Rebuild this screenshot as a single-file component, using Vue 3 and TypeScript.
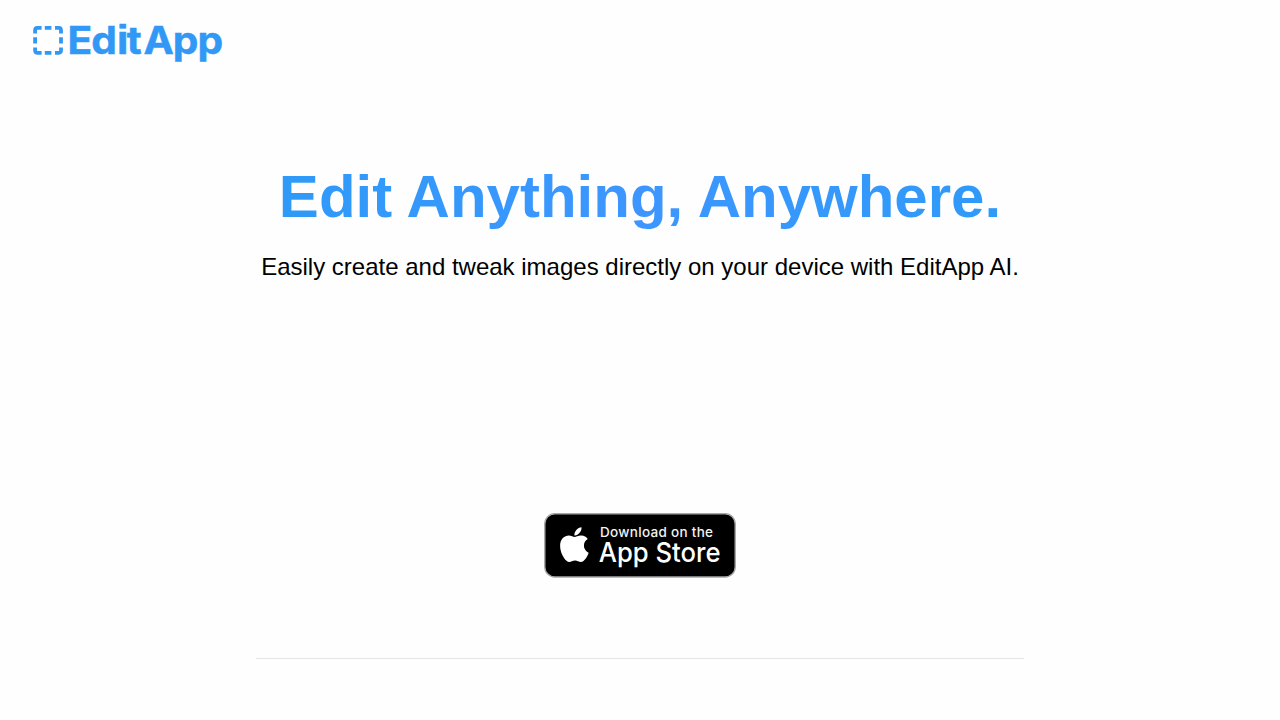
<script setup lang="ts">
interface Props {
  title?: string
  subtitle?: string
}

withDefaults(defineProps<Props>(), {
  title: 'Edit Anything, Anywhere.',
  subtitle: 'Easily create and tweak images directly on your device with EditApp AI.'
})
</script>

<template>
  <div class="page">
    <header class="header">
      <a class="brand" aria-label="EditApp">
        <svg class="logo" width="210" height="58" viewBox="0 -8 210 58">
          <!-- selection marquee -->
          <g fill="none" stroke="#3199f5" stroke-width="3.8" stroke-linejoin="round">
            <path d="M3.1 13.6V10.2Q3.1 7.8 5.5 7.8H9.6" />
            <path d="M23 7.8H26.8Q29 7.8 29 10.2V13.6" />
            <path d="M29 27.4V30.6Q29 32.8 26.8 32.8H23" />
            <path d="M9.6 32.8H5.5Q3.1 32.8 3.1 30.6V27.4" />
            <path d="M12.8 7.8H19.4M12.8 32.8H19.4M3.1 17.3V23.6M29 17.3V23.6" />
          </g>
          <text class="logo-text" transform="scale(1.07 1)" x="33.2 55.4 79.3 88.6 104.1 131.6 154.8" y="33.8">Ed<tspan class="logo-i">i</tspan>tApp</text>
        </svg>
      </a>
    </header>

    <main class="hero">
      <h1 class="title">{{ title }}</h1>
      <p class="subtitle">{{ subtitle }}</p>
      <a class="store-link" aria-label="Download on the App Store">
        <svg class="badge" width="192" height="65" viewBox="0 0 192 65">
          <rect x="0.8" y="0.8" width="190.4" height="63.2" rx="10" fill="#000" stroke="#a6a6a6" stroke-width="1.4" />
          <g transform="translate(15.8 14.2) scale(0.0758 0.0775)" fill="#fff">
            <path d="M318.7 268.7c-.2-36.7 16.4-64.4 50-84.8-18.8-26.9-47.2-41.7-84.7-44.6-35.5-2.8-74.3 20.7-88.5 20.7-15 0-49.4-19.7-76.4-19.7C63.3 141.2 4 184.8 4 273.5q0 39.3 14.4 81.2c12.8 36.7 59 126.7 107.2 125.2 25.2-.6 43-17.9 75.8-17.9 31.8 0 48.3 17.9 76.4 17.9 48.6-.7 90.4-82.5 102.6-119.3-65.2-30.7-61.7-90-61.7-91.9zm-56.6-164.2c27.3-32.4 24.8-61.9 24-72.5-24.1 1.4-52 16.4-67.9 34.9-17.5 19.8-27.8 44.3-25.6 71.9 26.1 2 49.9-11.4 69.5-34.3z" transform="translate(0 -32)" />
          </g>
          <text class="badge-small" x="56" y="24" textLength="113">Download on the</text>
          <text class="badge-large" x="54.8" y="49.2" textLength="121.8" lengthAdjust="spacingAndGlyphs">App Store</text>
        </svg>
      </a>
    </main>

    <hr class="divider" />
  </div>
</template>

<style>
body {
  background-color: #fefefe;
}
</style>

<style scoped>
.page {
  height: 720px;
  overflow: hidden;
  color: #000;
  font-family: "Liberation Sans", Arial, sans-serif;
}

.header {
  height: 80px;
  box-sizing: border-box;
  padding: 12px 32px;
}

.brand,
.logo,
.badge {
  display: block;
}

.logo-text {
  font: 700 38px Inter, sans-serif;
  fill: #3199f5;
  stroke: #3199f5;
  stroke-width: 0.5;
}

/* square dot on the wordmark's "i" */
.logo-i {
  font: 700 40px "Liberation Sans", Arial, sans-serif;
  stroke-width: 0.7;
}

.hero {
  display: flex;
  flex-direction: column;
  align-items: center;
  padding-top: 81px;
}

.title {
  margin: 0;
  font-size: 60px;
  line-height: 72px;
  font-weight: 700;
  color: transparent;
  background: linear-gradient(90deg, #2f9af8, #3d96ff 50%, #2f9af8);
  background-clip: text;
}

.subtitle {
  margin: 16px 0 0;
  font-size: 24px;
  line-height: 36px;
}

.store-link {
  margin-top: 228px;
}

.badge-small {
  font: 500 13.5px Inter, sans-serif;
  fill: #f2f2f2;
}

.badge-large {
  font: 500 27px Inter, sans-serif;
  fill: #fff;
}

.divider {
  width: 768px;
  height: 1px;
  margin: 80px auto 0;
  border: 0;
  background-color: #e5e5e5;
}
</style>
